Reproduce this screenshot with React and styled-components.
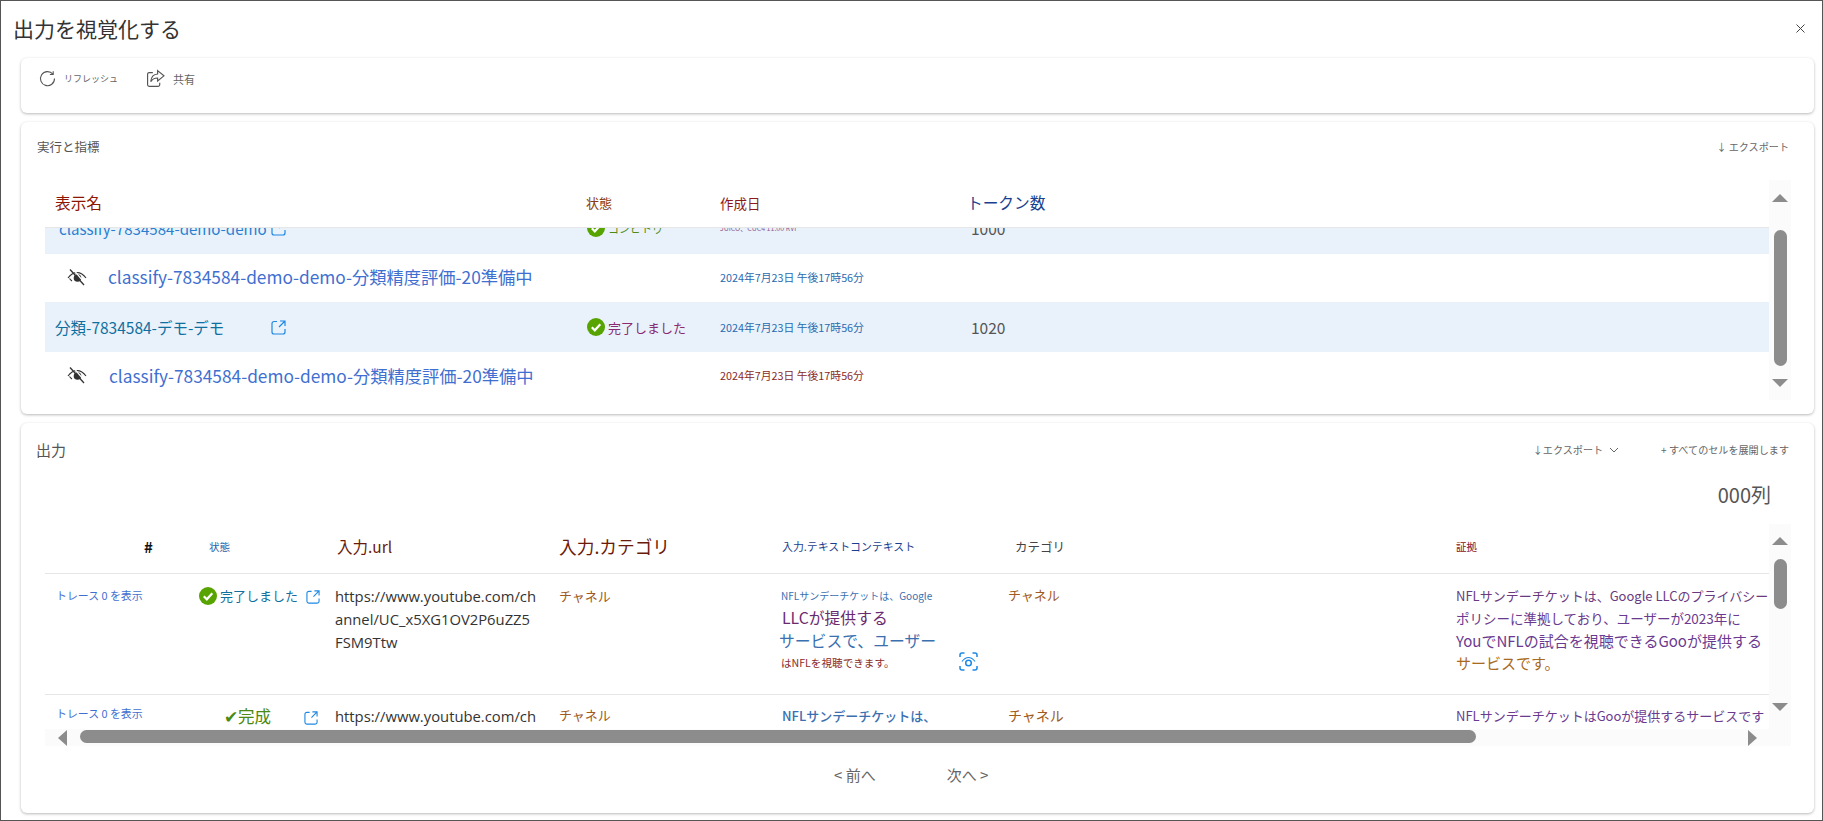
import React from "react";
import styled, { createGlobalStyle } from "styled-components";

const Global = createGlobalStyle`
  html, body { margin: 0; padding: 0; background: #fff; }
  body { font-family: "Noto Sans CJK JP", "Noto Sans", sans-serif; }
`;

const Page = styled.div`
  box-sizing: border-box;
  width: 1823px;
  height: 821px;
  border: 1px solid #555;
  overflow: hidden;
  display: flex;
  flex-direction: column;
  background: #fff;
`;
const TopBar = styled.header`
  height: 57px;
  flex: none;
  display: flex;
  align-items: center;
  justify-content: space-between;
  padding: 0 16px 3px 12px;
  box-sizing: border-box;
`;
const PageTitle = styled.h1`
  margin: 0;
  font-size: 21px;
  font-weight: 400;
  color: #333;
`;
const Close = styled.span`
  display: flex;
  color: #444;
`;
const Cards = styled.div`
  display: flex;
  flex-direction: column;
  gap: 9px;
  padding: 0 8px 0 20px;
`;
const Card = styled.section`
  box-sizing: border-box;
  height: ${(p) => p.$h}px;
  background: #fff;
  border-radius: 6px;
  box-shadow: 0 1px 3px rgba(0, 0, 0, 0.28);
  display: flex;
  flex-direction: column;
`;
const Toolbar = styled.div`
  display: flex;
  align-items: center;
  gap: 28px;
  padding: 11px 0 0 18px;
`;
const ToolButton = styled.span`
  display: flex;
  align-items: center;
  gap: 8px;
  color: #666;
  font-size: ${(p) => p.$size}px;
`;
const CardHead = styled.div`
  flex: none;
  height: ${(p) => p.$h}px;
  padding: ${(p) => p.$top}px 25px 0 ${(p) => p.$left}px;
  box-sizing: border-box;
  display: flex;
  justify-content: space-between;
  align-items: flex-start;
`;
const CardTitle = styled.span`
  font-size: ${(p) => p.$size}px;
  color: #555;
  line-height: 20px;
`;
const Actions = styled.div`
  display: flex;
  gap: 42px;
`;
const Action = styled.span`
  display: flex;
  align-items: center;
  gap: 6px;
  font-size: 10.1px;
  line-height: 20px;
  color: #666;
`;
const TableWrap = styled.div`
  display: flex;
  margin: 0 23px 0 24px;
`;
const TableMain = styled.div`
  flex: 1;
  min-width: 0;
  overflow: hidden;
`;
const RunRow = styled.div`
  display: grid;
  grid-template-columns: 541px 134px 247px 1fr;
  align-items: center;
  height: ${(p) => p.$h}px;
  padding-bottom: ${(p) => p.$lift || 0}px;
  background: ${(p) => (p.$alt ? "#e9f2fb" : "#fff")};
  border-bottom: ${(p) => (p.$line ? "1px solid #e6e6e6" : "none")};
  box-sizing: border-box;
`;
const RunHeadRow = styled(RunRow)`
  position: relative;
  z-index: 1;
  background: #fff;
`;
const RunBody = styled.div`
  height: 172px;
  overflow: hidden;
`;
const RunList = styled.div`
  margin-top: -22px;
`;
const HeadCell = styled.span`
  font-size: ${(p) => p.$size}px;
  color: ${(p) => p.$color};
  padding-left: ${(p) => p.$pad || 0}px;
  font-weight: ${(p) => p.$weight || 400};
`;
const NameCell = styled.div`
  display: flex;
  align-items: center;
  padding-left: ${(p) => p.$pad}px;
`;
const NameLink = styled.a`
  font-size: ${(p) => p.$size}px;
  color: ${(p) => p.$color};
  width: ${(p) => p.$w || "auto"};
  margin-left: ${(p) => p.$ml || 0}px;
  flex: none;
  white-space: nowrap;
`;
const StatusCell = styled.div`
  display: flex;
  align-items: center;
  gap: 3px;
  font-size: ${(p) => p.$size || 13}px;
  color: ${(p) => p.$color};
  padding-left: 1px;
`;
const DateCell = styled.span`
  font-size: ${(p) => p.$size || 10.8}px;
  color: ${(p) => p.$color};
`;
const TokenCell = styled.span`
  font-size: 15.5px;
  color: #555;
  padding-left: 4px;
`;
const ScrollY = styled.div`
  flex: none;
  width: 22px;
  background: #fbfbfb;
  display: flex;
  flex-direction: column;
  align-items: center;
  box-sizing: border-box;
  margin-top: ${(p) => p.$offset || 0}px;
  padding-top: ${(p) => p.$top}px;
`;
const Thumb = styled.div`
  width: 13px;
  height: ${(p) => p.$h}px;
  margin: ${(p) => p.$gap}px 0 ${(p) => p.$after}px;
  border-radius: 7px;
  background: #8c8c8c;
`;
const ArrowUp = styled.div`
  width: 0;
  height: 0;
  border-left: 8px solid transparent;
  border-right: 8px solid transparent;
  border-bottom: 8px solid #8c8c8c;
`;
const ArrowDown = styled.div`
  width: 0;
  height: 0;
  border-left: 8px solid transparent;
  border-right: 8px solid transparent;
  border-top: 8px solid #8c8c8c;
`;
const Counter = styled.div`
  align-self: flex-end;
  margin: 0 43px 0 0;
  height: 33px;
  font-size: 20px;
  line-height: 28px;
  color: #555;
`;
const OutGrid = styled.div`
  display: grid;
  grid-template-columns: 154px 136px 224px 222px 227px 448px 313px;
  height: ${(p) => p.$h}px;
  padding-top: ${(p) => p.$pt || 0}px;
  box-sizing: border-box;
  border-bottom: ${(p) => (p.$line ? "1px solid #e6e6e6" : "none")};
  align-items: ${(p) => p.$align || "start"};
`;
const OutBody = styled.div`
  height: 155px;
  overflow: hidden;
`;
const Cell = styled.div`
  padding: ${(p) => p.$top || 0}px 0 0 ${(p) => p.$left || 0}px;
  font-size: ${(p) => p.$size || 13}px;
  line-height: ${(p) => p.$lh || 23}px;
  font-weight: ${(p) => p.$weight || 400};
  color: ${(p) => p.$color || "#333"};
`;
const Url = styled(Cell)`
  font-family: "Open Sans", sans-serif;
  width: 201px;
  word-break: break-all;
`;
const Line = styled.div`
  font-size: ${(p) => p.$size}px;
  color: ${(p) => p.$color};
  line-height: 22.3px;
  white-space: nowrap;
  margin-left: ${(p) => p.$left || 0}px;
`;
const StatusFlex = styled.div`
  display: flex;
  align-items: center;
  gap: ${(p) => p.$gap}px;
  padding-top: ${(p) => p.$top}px;
  color: ${(p) => p.$color};
  font-size: ${(p) => p.$size}px;
  line-height: 23px;
  padding-left: ${(p) => p.$left}px;
`;
const IconSlot = styled.span`
  display: flex;
  margin: ${(p) => p.$top || 0}px 0 0 ${(p) => p.$ml || 0}px;
`;
const ContextCell = styled.div`
  display: flex;
  align-items: flex-end;
  padding-top: 11px;
`;
const ScanSlot = styled.span`
  display: flex;
  margin: 0 0 3px 23px;
`;
const EvidenceCell = styled.div`
  padding-top: 11px;
`;
const ScrollRow = styled.div`
  display: flex;
  align-items: center;
  height: 17px;
  margin: 0 0 0 24px;
  width: 1746px;
  background: #fbfbfb;
  box-sizing: border-box;
  padding: 0 34px 0 13px;
`;
const ArrowLeft = styled.div`
  width: 0;
  height: 0;
  border-top: 8px solid transparent;
  border-bottom: 8px solid transparent;
  border-right: 9px solid #8c8c8c;
`;
const ArrowRight = styled.div`
  width: 0;
  height: 0;
  border-top: 8px solid transparent;
  border-bottom: 8px solid transparent;
  border-left: 9px solid #8c8c8c;
`;
const ThumbH = styled.div`
  width: 1396px;
  height: 13px;
  border-radius: 7px;
  background: #8c8c8c;
  margin: -2px auto 0 13px;
`;
const Pager = styled.div`
  display: flex;
  justify-content: flex-start;
  gap: 71px;
  padding: 19px 0 0 813px;
  font-size: 15px;
  line-height: 20px;
  color: #666;
`;
const ColumnWrap = styled.div`
  flex: 1;
  min-width: 0;
  overflow: hidden;
`;
const CheckSvg = styled.svg`
  flex: none;
`;

const RefreshIcon = () => (
  <svg width="17" height="17" viewBox="0 0 17 17" fill="none" stroke="#555" strokeWidth="1.1">
    <path d="M13.9 4.2A7 7 0 1 0 15.5 8.5" />
    <path d="M14.2 1.2v3.3h-3.3" />
  </svg>
);
const ShareIcon = () => (
  <svg width="19" height="19" viewBox="0 0 18 18" fill="none" stroke="#555" strokeWidth="1.1">
    <path d="M6.5 3.5H3A1.5 1.5 0 0 0 1.5 5v10A1.5 1.5 0 0 0 3 16.5h8.5A1.5 1.5 0 0 0 13 15v-2" />
    <path d="M11 1.5l6 5-6 4.8V8.5c-3 0-5 1-6.5 3.5C4.8 8 7 5 11 4.7z" />
  </svg>
);
const CloseIcon = () => (
  <svg width="11" height="11" viewBox="0 0 11 11" stroke="#444" strokeWidth="1">
    <path d="M1.5 1.5l8 8M9.5 1.5l-8 8" />
  </svg>
);
const ExternalIcon = ({ size = 15 }) => (
  <svg width={size} height={size} viewBox="0 0 15 15" fill="none" stroke="#1e88e5" strokeWidth="1.2">
    <path d="M6 1.5H3a2 2 0 0 0-2 2V12a2 2 0 0 0 2 2h9a2 2 0 0 0 2-2V9" />
    <path d="M9 1h5v5M14 1L8 7" />
  </svg>
);
const CheckIcon = ({ size = 18 }) => (
  <CheckSvg width={size} height={size} viewBox="0 0 18 18">
    <circle cx="9" cy="9" r="9" fill="#57a300" />
    <path d="M4.8 9.3l3 3 5.5-6" fill="none" stroke="#fff" strokeWidth="2.2" />
  </CheckSvg>
);
const EyeOffIcon = () => (
  <svg width="20" height="18" viewBox="0 0 20 18" fill="none" stroke="#333" strokeWidth="1.1">
    <path d="M1 10c2.5-3.6 5.5-5.400 9-5.400S16.5 6.400 19 10" />
    <path d="M2.5 10.5c.8 1 1.6 1.800 2.5 2.500" />
    <circle cx="10.5" cy="10" r="3.8" fill="#333" stroke="none" />
    <path d="M4.2 1.2L18 17.5" stroke="#fff" strokeWidth="1.3" transform="translate(1 -1)" />
    <path d="M3 1.5L17 17" strokeWidth="1.3" />
  </svg>
);
const ScanIcon = () => (
  <svg width="19" height="19" viewBox="0 0 19 19" fill="none" stroke="#1e88e5" strokeWidth="1.5">
    <path d="M1 5V3a2 2 0 0 1 2-2h2.500M13.500 1H16a2 2 0 0 1 2 2v2M18 14v2a2 2 0 0 1-2 2h-2.500M5.500 18H3a2 2 0 0 1-2-2v-2" />
    <path d="M3 9.5C5 6.800 7 5.500 9.500 5.500s4.500 1.300 6.500 4" strokeWidth="1.2" />
    <circle cx="9.5" cy="11" r="2.8" />
  </svg>
);
const ChevronIcon = () => (
  <svg width="10" height="6" viewBox="0 0 10 6" fill="none" stroke="#666" strokeWidth="1">
    <path d="M1 1l4 4 4-4" />
  </svg>
);

const blue = "#3f6fd0";
const dateBlue = "#2a6ab0";

export default function App() {
  return (
    <Page>
      <Global />
      <TopBar>
        <PageTitle>出力を視覚化する</PageTitle>
        <Close><CloseIcon /></Close>
      </TopBar>
      <Cards>
        <Card $h={55}>
          <Toolbar>
            <ToolButton $size={9}><RefreshIcon />リフレッシュ</ToolButton>
            <ToolButton $size={11}><ShareIcon />共有</ToolButton>
          </Toolbar>
        </Card>

        <Card $h={292}>
          <CardHead $h={58} $top={15} $left={16}>
            <CardTitle $size={12.5}>実行と指標</CardTitle>
            <Action>↓ エクスポート</Action>
          </CardHead>
          <TableWrap>
            <TableMain>
              <RunHeadRow $h={48} $line $lift={2}>
                <HeadCell $size={15.7} $color="#8f1500" $pad={10}>表示名</HeadCell>
                <HeadCell $size={13} $color="#8a3c10">状態</HeadCell>
                <HeadCell $size={13.5} $color="#8b1a1a">作成日</HeadCell>
                <HeadCell $size={15.7} $color="#1a3f8f">トークン数</HeadCell>
              </RunHeadRow>
              <RunBody>
                <RunList>
                  <RunRow $h={48} $alt $lift={4}>
                    <NameCell $pad={14}>
                      <NameLink $size={15.1} $color="#2a7fd0" $w="212px">classify-7834584-demo-demo</NameLink>
                      <ExternalIcon />
                    </NameCell>
                    <StatusCell $color="#4f8a10" $size={11}><CheckIcon />コンピトゥ</StatusCell>
                    <DateCell $size={7} $color="#8a5a90">JUICO、CUC4 11.00 RVI</DateCell>
                    <TokenCell>1000</TokenCell>
                  </RunRow>
                  <RunRow $h={48} $lift={3}>
                    <NameCell $pad={22}>
                      <EyeOffIcon />
                      <NameLink $size={17.3} $color={blue} $ml={21}>classify-7834584-demo-demo-分類精度評価-20準備中</NameLink>
                    </NameCell>
                    <span />
                    <DateCell $color={dateBlue}>2024年7月23日 午後17時56分</DateCell>
                    <span />
                  </RunRow>
                  <RunRow $h={50} $alt>
                    <NameCell $pad={10}>
                      <NameLink $size={15.5} $color="#0f6f9f" $w="216px">分類-7834584-デモ-デモ</NameLink>
                      <ExternalIcon />
                    </NameCell>
                    <StatusCell $color="#8a2a70"><CheckIcon />完了しました</StatusCell>
                    <DateCell $color={dateBlue}>2024年7月23日 午後17時56分</DateCell>
                    <TokenCell>1020</TokenCell>
                  </RunRow>
                  <RunRow $h={49} $line $lift={2}>
                    <NameCell $pad={22}>
                      <EyeOffIcon />
                      <NameLink $size={17.3} $color={blue} $ml={22}>classify-7834584-demo-demo-分類精度評価-20準備中</NameLink>
                    </NameCell>
                    <span />
                    <DateCell $color="#8a2a2a">2024年7月23日 午後17時56分</DateCell>
                    <span />
                  </RunRow>
                </RunList>
              </RunBody>
            </TableMain>
            <ScrollY $top={14}>
              <ArrowUp />
              <Thumb $h={136} $gap={28} $after={13} />
              <ArrowDown />
            </ScrollY>
          </TableWrap>
        </Card>

        <Card $h={390}>
          <CardHead $h={58} $top={17} $left={15}>
            <CardTitle $size={15}>出力</CardTitle>
            <Actions>
              <Action>↓エクスポート <ChevronIcon /></Action>
              <Action>+ すべてのセルを展開します</Action>
            </Actions>
          </CardHead>
          <Counter>000列</Counter>
          <TableWrap>
            <ColumnWrap>
              <OutGrid $h={60} $pt={5} $line $align="center">
                <HeadCell $size={15} $color="#111" $pad={99} $weight={700}>#</HeadCell>
                <HeadCell $size={10.5} $color="#1f5fa8" $pad={10}>状態</HeadCell>
                <HeadCell $size={15.5} $color="#6a1a0a" $pad={2}>入力.url</HeadCell>
                <HeadCell $size={17.7} $color="#6a1a0a">入力.カテゴリ</HeadCell>
                <HeadCell $size={10.9} $color="#1a3f8f" $pad={1}>入力.テキストコンテキスト</HeadCell>
                <HeadCell $size={12.5} $color="#444" $pad={7}>カテゴリ</HeadCell>
                <HeadCell $size={10.5} $color="#8a1010">証拠</HeadCell>
              </OutGrid>
              <OutBody>
                <OutGrid $h={121} $line>
                  <Cell $left={11} $top={10} $size={10.9} $color="#3f6fd0">トレース 0 を表示</Cell>
                  <StatusFlex $gap={3} $top={10} $left={0} $color="#0f6f9f" $size={13}>
                    <CheckIcon />完了しました
                    <IconSlot $ml={5} $top={3}><ExternalIcon size={14} /></IconSlot>
                  </StatusFlex>
                  <Url $top={11} $size={14.8}>https://www.youtube.com/channel/UC_x5XG1OV2P6uZZ5FSM9Ttw</Url>
                  <Cell $top={10} $size={13} $color="#a05a20">チャネル</Cell>
                  <ContextCell>
                    <div>
                      <Line $size={10} $color="#3a6fb0">NFLサンデーチケットは、Google</Line>
                      <Line $size={15.8} $color="#6a2a70" $left={1}>LLCが提供する</Line>
                      <Line $size={15.8} $color="#3a6fb0" $left={-2}>サービスで、ユーザー</Line>
                      <Line $size={10.6} $color="#8a2a2a">はNFLを視聴できます。</Line>
                    </div>
                    <ScanSlot><ScanIcon /></ScanSlot>
                  </ContextCell>
                  <Cell $top={9} $size={13} $color="#a05a20">チャネル</Cell>
                  <EvidenceCell>
                    <Line $size={13} $color="#6a3a80">NFLサンデーチケットは、Google LLCのプライバシー</Line>
                    <Line $size={13.5} $color="#6a3a90">ポリシーに準拠しており、ユーザーが2023年に</Line>
                    <Line $size={15} $color="#6a3a90">YouでNFLの試合を視聴できるGooが提供する</Line>
                    <Line $size={15} $color="#a86a20">サービスです。</Line>
                  </EvidenceCell>
                </OutGrid>
                <OutGrid $h={35}>
                  <Cell $left={11} $top={7} $size={10.9} $color="#3f6fd0">トレース 0 を表示</Cell>
                  <StatusFlex $gap={0} $top={10} $left={25} $color="#4a8a10" $size={16.5}>
                    ✔完成
                    <IconSlot $ml={33} $top={3}><ExternalIcon size={14} /></IconSlot>
                  </StatusFlex>
                  <Url $top={10} $size={14.8}>https://www.youtube.com/ch</Url>
                  <Cell $top={8} $size={13} $color="#a05a20">チャネル</Cell>
                  <Cell $top={9} $left={1} $size={13} $weight={500} $color="#3a6fb0">NFLサンデーチケットは、</Cell>
                  <Cell $top={9} $size={14} $color="#a05a20">チャネル</Cell>
                  <Cell $top={9} $size={13} $color="#6a3a90">NFLサンデーチケットはGooが提供するサービスです</Cell>
                </OutGrid>
              </OutBody>
            </ColumnWrap>
            <ScrollY $top={13} $offset={10}>
              <ArrowUp />
              <Thumb $h={50} $gap={14} $after={94} />
              <ArrowDown />
            </ScrollY>
          </TableWrap>
          <ScrollRow>
            <ArrowLeft />
            <ThumbH />
            <ArrowRight />
          </ScrollRow>
          <Pager>
            <span>&lt; 前へ</span>
            <span>次へ &gt;</span>
          </Pager>
        </Card>
      </Cards>
    </Page>
  );
}
